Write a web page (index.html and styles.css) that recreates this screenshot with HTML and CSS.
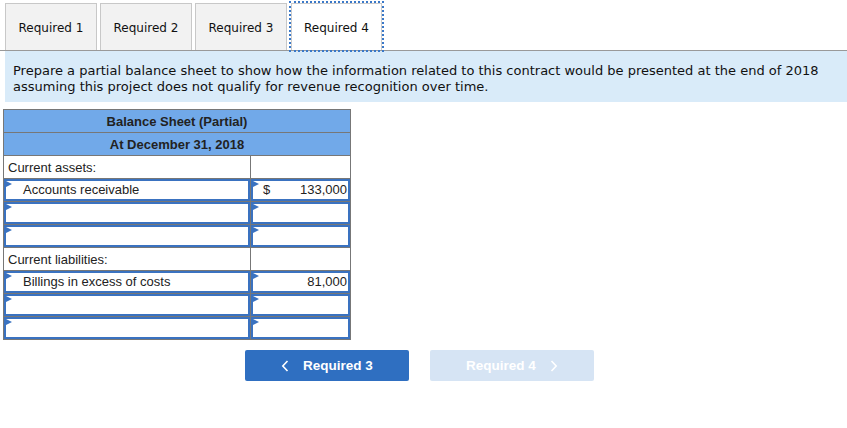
FILE: index.html
```html
<!DOCTYPE html>
<html lang="en">
<head>
    <meta charset="UTF-8">
    <meta name="viewport" content="width=device-width, initial-scale=1.0">
    <title>Balance Sheet (Partial)</title>
    <link rel="stylesheet" href="styles.css">
</head>
<body>
<div class="page">
    <div class="tabs">
        <div class="tab">Required 1</div>
        <div class="tab">Required 2</div>
        <div class="tab">Required 3</div>
        <div class="tab active">Required 4</div>
    </div>

    <div class="instructions">
        Prepare a partial balance sheet to show how the information related to this contract would be presented at the end of 2018<br>
        assuming this project does not qualify for revenue recognition over time.
    </div>

    <table class="sheet">
        <tr class="head"><th colspan="2">Balance Sheet (Partial)</th></tr>
        <tr class="head"><th colspan="2">At December 31, 2018</th></tr>
        <tr>
            <td class="label">Current assets:</td>
            <td></td>
        </tr>
        <tr>
            <td><div class="input indent">Accounts receivable</div></td>
            <td><div class="input amount"><span>$</span><span>133,000</span></div></td>
        </tr>
        <tr>
            <td><div class="input"></div></td>
            <td><div class="input"></div></td>
        </tr>
        <tr>
            <td><div class="input"></div></td>
            <td><div class="input"></div></td>
        </tr>
        <tr>
            <td class="label">Current liabilities:</td>
            <td></td>
        </tr>
        <tr>
            <td><div class="input indent">Billings in excess of costs</div></td>
            <td><div class="input amount"><span></span><span>81,000</span></div></td>
        </tr>
        <tr>
            <td><div class="input"></div></td>
            <td><div class="input"></div></td>
        </tr>
        <tr>
            <td><div class="input"></div></td>
            <td><div class="input"></div></td>
        </tr>
    </table>

    <div class="nav">
        <button class="nav-btn">
            <svg class="chev left" width="8" height="12" viewBox="0 0 8 12"><path d="M6.5 1 L1.8 6 L6.5 11" fill="none" stroke="#fff" stroke-width="1.6"/></svg>
            Required 3
        </button>
        <button class="nav-btn disabled">
            Required 4
            <svg class="chev right" width="8" height="12" viewBox="0 0 8 12"><path d="M1.5 1 L6.2 6 L1.5 11" fill="none" stroke="#fff" stroke-width="1.6"/></svg>
        </button>
    </div>
</div>
</body>
</html>
```

FILE: styles.css
```css
body {
    margin: 0;
    font-family: "DejaVu Sans", Verdana, sans-serif;
    background: #fff;
    color: #222;
}
.page {
    padding: 3px 0 0 0;
}
.tabs {
    display: flex;
    gap: 3px;
    padding-left: 5px;
    border-bottom: 1px solid #999;
}
.tab {
    width: 90px;
    height: 45px;
    padding-top: 1px;
    line-height: 46px;
    text-align: center;
    font-size: 12px;
    color: #111;
    background: #f2f2f2;
    border: 1px solid #c8c8c8;
    border-bottom: none;
}
.tab.active {
    background: #fff;
    margin-left: 1px;
    width: 89px;
    outline: 2px dotted #3a78c8;
    border: 1px solid #ccc;
    border-bottom: none;
}
.instructions {
    margin-left: 5px;
    background: #d9ebf9;
    padding: 12px 8px 7px 8px;
    font-size: 13px;
    line-height: 16px;
    color: #111;
}
.sheet {
    margin: 7px 0 0 3px;
    border-collapse: collapse;
    font-family: "Liberation Sans", Arial, sans-serif;
    font-size: 13px;
    color: #222;
    border: 1px solid #777;
}
.sheet th {
    background: #71a9e9;
    height: 22px;
    padding: 0;
    font-weight: bold;
    border-bottom: 1px solid #777;
}
.sheet td {
    height: 22px;
    padding: 0;
    border: 1px solid #777;
}
.sheet td:first-child {
    width: 246px;
}
.sheet td:last-child {
    width: 99px;
}
.sheet td.label {
    padding-left: 4px;
    background: #fff;
}
.sheet td.label:first-child {
    width: 242px;
}
.input {
    position: relative;
    box-sizing: border-box;
    height: 22px;
    line-height: 18px;
    border: 2px solid #3a72c0;
}
.input::before {
    content: "";
    position: absolute;
    left: 0;
    top: 0;
    border-top: 3px solid transparent;
    border-bottom: 3px solid transparent;
    border-left: 6px solid #3a72c0;
}
.input.indent {
    padding-left: 17px;
}
.input.amount {
    display: flex;
    justify-content: space-between;
    padding: 0 1px 0 10px;
}
.nav {
    display: flex;
    gap: 21px;
    padding: 10px 0 0 245px;
}
.nav-btn {
    display: flex;
    align-items: center;
    justify-content: center;
    width: 164px;
    height: 31px;
    border: none;
    border-radius: 2px;
    background: #2f6fc1;
    color: #fff;
    font-family: "Liberation Sans", Arial, sans-serif;
    font-size: 13.5px;
    font-weight: bold;
}
.nav-btn.disabled {
    background: #d6e4f4;
}
.chev.left {
    margin-right: 14px;
}
.chev.right {
    margin-left: 14px;
}
```
